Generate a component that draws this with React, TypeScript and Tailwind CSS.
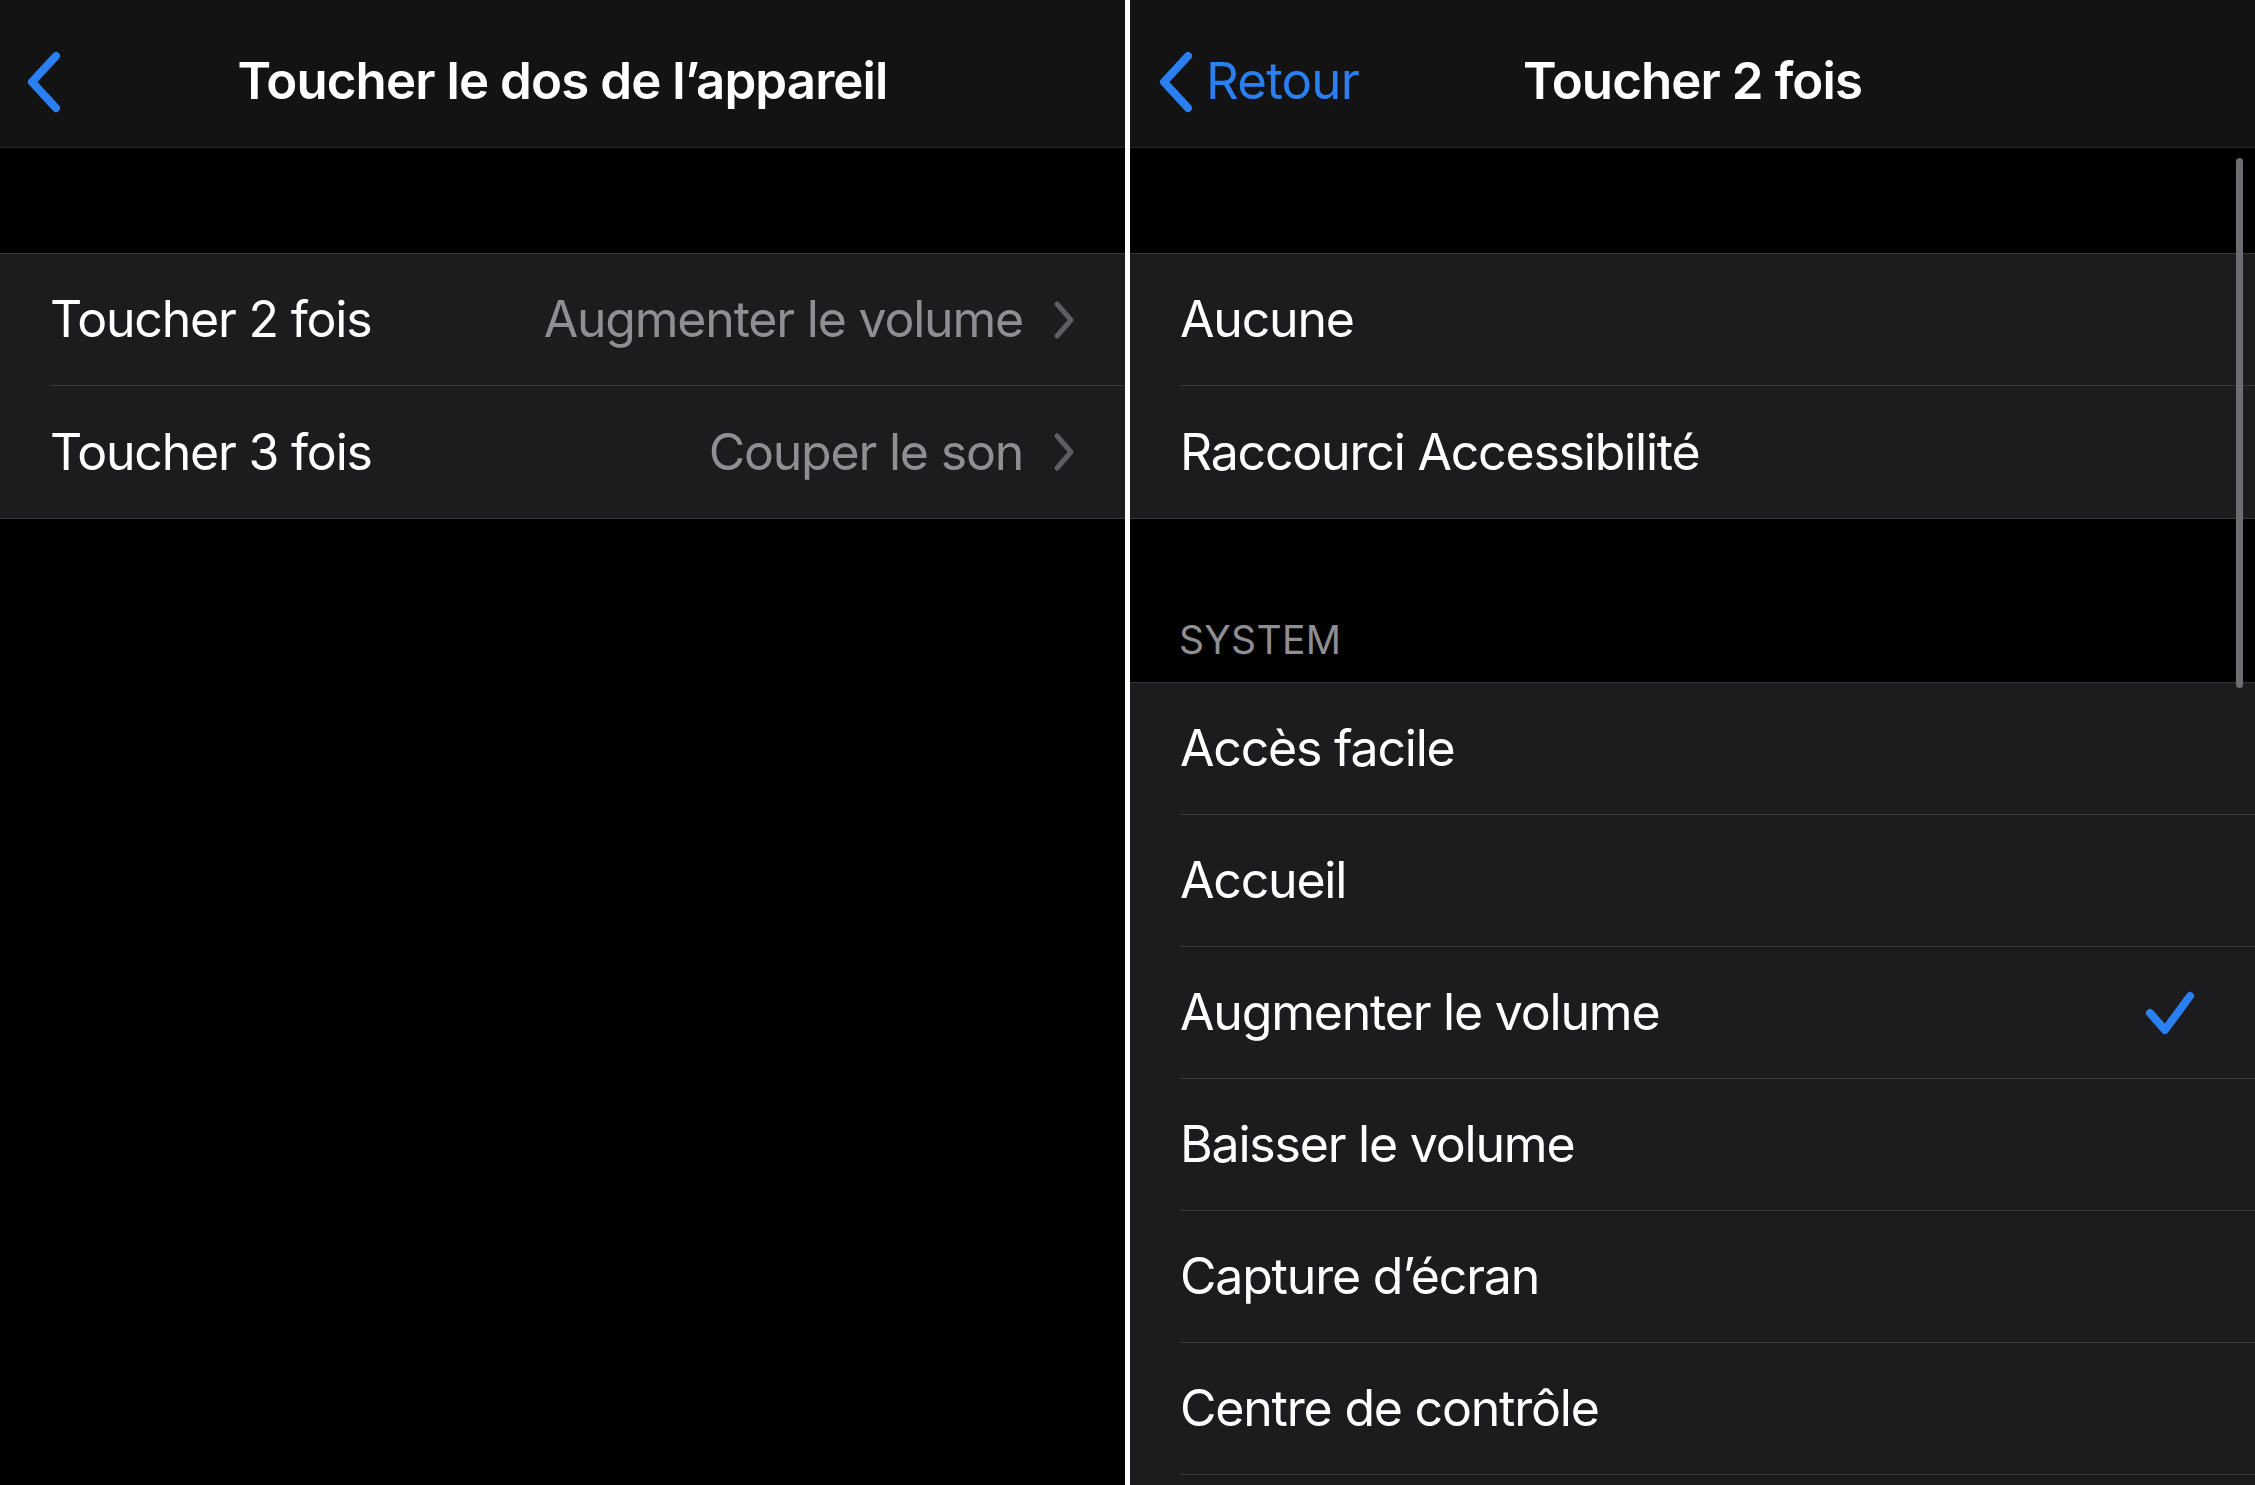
function BackChevron() {
    return (
        <svg width="40" height="64" viewBox="0 0 40 64" fill="none">
            <polyline points="32,6 8,32 32,58" stroke="#2a7ff3" strokeWidth="8" strokeLinecap="round" strokeLinejoin="round" />
        </svg>
    )
}

function RowChevron() {
    return (
        <svg width="22" height="40" viewBox="0 0 22 40" fill="none">
            <polyline points="4,4 18,20 4,36" stroke="#5c5c61" strokeWidth="5" strokeLinecap="round" strokeLinejoin="round" />
        </svg>
    )
}

function Check() {
    return (
        <svg width="50" height="48" viewBox="0 0 50 48" fill="none">
            <polyline points="5,24 20,41 45,7" stroke="#2a7ff3" strokeWidth="8" strokeLinecap="round" strokeLinejoin="round" />
        </svg>
    )
}

function Row({ label, value, last, checked }: { label: string; value?: string; last?: boolean; checked?: boolean }) {
    return (
        <div className="pl-[50px] bg-[#1c1c1e]">
            <div className={`h-[132px] flex items-center ${checked ? "pr-[60px]" : "pr-[50px]"} ${last ? "" : "border-b border-[#38383a]"}`}>
                <span className="text-[50px] text-white tracking-[-1.2px]">{label}</span>
                <div className="ml-auto flex items-center gap-[30px]">
                    {value && <span className="text-[50px] text-[#8e8e93] tracking-[-1.2px]">{value}</span>}
                    {value && <RowChevron />}
                    {checked && <Check />}
                </div>
            </div>
        </div>
    )
}

function Group({ children }: { children: React.ReactNode }) {
    return <div className="shrink-0 border-t border-b border-[#38383a]">{children}</div>
}

export default function App() {
    const system = ["Accès facile", "Accueil", "Augmenter le volume", "Baisser le volume", "Capture d’écran", "Centre de contrôle", ""]

    return (
        <div className="w-[2255px] h-[1485px] flex bg-black overflow-hidden font-['Inter',sans-serif]">
            {/* panneau gauche */}
            <div className="w-[1125px] shrink-0 flex flex-col">
                <div className="h-[148px] shrink-0 pt-[16px] bg-[#131313] border-b border-[#262626] grid grid-cols-[1fr_auto_1fr] items-center">
                    <div className="pl-[24px] flex items-center">
                        <BackChevron />
                    </div>
                    <h1 className="text-[51px] font-semibold text-white tracking-[-0.9px]">Toucher le dos de l’appareil</h1>
                    <div />
                </div>
                <div className="h-[105px] shrink-0" />
                <Group>
                    <Row label="Toucher 2 fois" value="Augmenter le volume" />
                    <Row label="Toucher 3 fois" value="Couper le son" last />
                </Group>
            </div>

            <div className="w-[5px] shrink-0 bg-white" />

            {/* panneau droit */}
            <div className="flex-1 flex flex-col relative overflow-hidden">
                <div className="h-[148px] shrink-0 pt-[16px] bg-[#131313] border-b border-[#262626] grid grid-cols-[1fr_auto_1fr] items-center">
                    <div className="pl-[26px] flex items-center gap-[10px]">
                        <BackChevron />
                        <span className="text-[51px] text-[#2a7ff3] tracking-[-0.8px]">Retour</span>
                    </div>
                    <h1 className="text-[51px] font-semibold text-white tracking-[-0.9px]">Toucher 2 fois</h1>
                    <div />
                </div>
                <div className="h-[105px] shrink-0" />
                <Group>
                    <Row label="Aucune" />
                    <Row label="Raccourci Accessibilité" last />
                </Group>
                <div className="h-[163px] shrink-0 flex items-end pl-[49px] pb-[13px]">
                    <span className="text-[39px] text-[#8e8e93] uppercase tracking-[0.3px]">System</span>
                </div>
                <Group>
                    {system.map((s, i) => (
                        <Row key={i} label={s} checked={s === "Augmenter le volume"} />
                    ))}
                </Group>
                <div className="absolute right-[12px] top-[158px] w-[7px] h-[530px] rounded-full bg-[#6e6e72]" />
            </div>
        </div>
    )
}
